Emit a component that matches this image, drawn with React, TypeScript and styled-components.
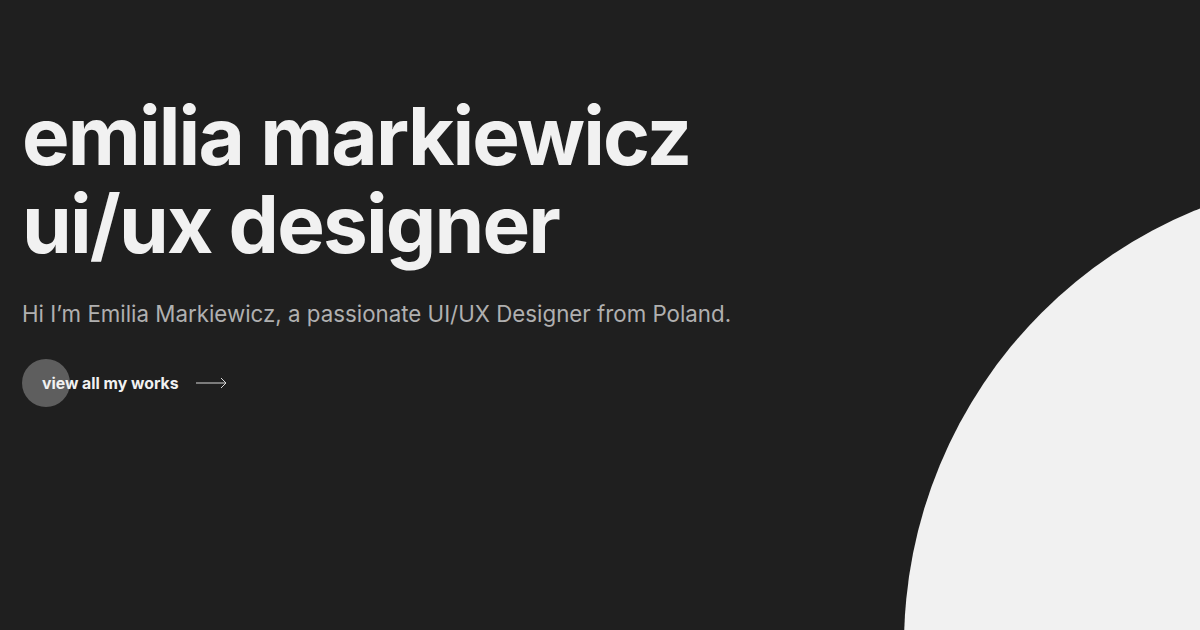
import styled, { createGlobalStyle } from 'styled-components';

const GlobalStyle = createGlobalStyle`
  html, body {
    margin: 0;
    padding: 0;
    background: #1f1f1f;
  }
  body {
    font-family: Inter, "Noto Sans", sans-serif;
    -webkit-font-smoothing: antialiased;
  }
`;

const Hero = styled.section`
  position: relative;
  height: 630px;
  overflow: hidden;
  background: #1f1f1f;
  padding: 92px 22px 0;
  box-sizing: border-box;
`;

const Blob = styled.div`
  position: absolute;
  left: 904px;
  top: 175px;
  width: 940px;
  height: 940px;
  border-radius: 50%;
  background: #f1f1f1;
`;

const Title = styled.h1`
  margin: 0;
  font-size: 80px;
  line-height: 88px;
  font-weight: 700;
  letter-spacing: -1.85px;
  color: #f1f1f1;
`;

const Intro = styled.p`
  margin: 30px 0 0;
  font-size: 22.3px;
  line-height: 32px;
  font-weight: 400;
  color: #b0b0b0;
`;

const WorksLink = styled.a`
  position: relative;
  display: inline-flex;
  align-items: center;
  gap: 17px;
  margin-top: 29px;
  height: 48px;
  padding-left: 20px;
  color: #f1f1f1;
  font-size: 15.8px;
  font-weight: 700;
  text-decoration: none;

  &::before {
    content: '';
    position: absolute;
    left: 0;
    top: 0;
    width: 48px;
    height: 48px;
    border-radius: 50%;
    background: #5e5e5e;
  }

  span, svg {
    position: relative;
  }
`;

const Arrow = () => (
  <svg width="31" height="12" viewBox="0 0 31 12" fill="none">
    <path d="M0 6h30M25 1l5 5-5 5" stroke="#d8d8d8" strokeWidth="1" />
  </svg>
);

const App = () => (
  <>
    <GlobalStyle />
    <Hero>
      <Blob />
      <Title>
        emilia markiewicz
        <br />
        ui/ux designer
      </Title>
      <Intro>Hi I’m Emilia Markiewicz, a passionate UI/UX Designer from Poland.</Intro>
      <WorksLink href="#">
        <span>view all my works</span>
        <Arrow />
      </WorksLink>
    </Hero>
  </>
);

export default App;
